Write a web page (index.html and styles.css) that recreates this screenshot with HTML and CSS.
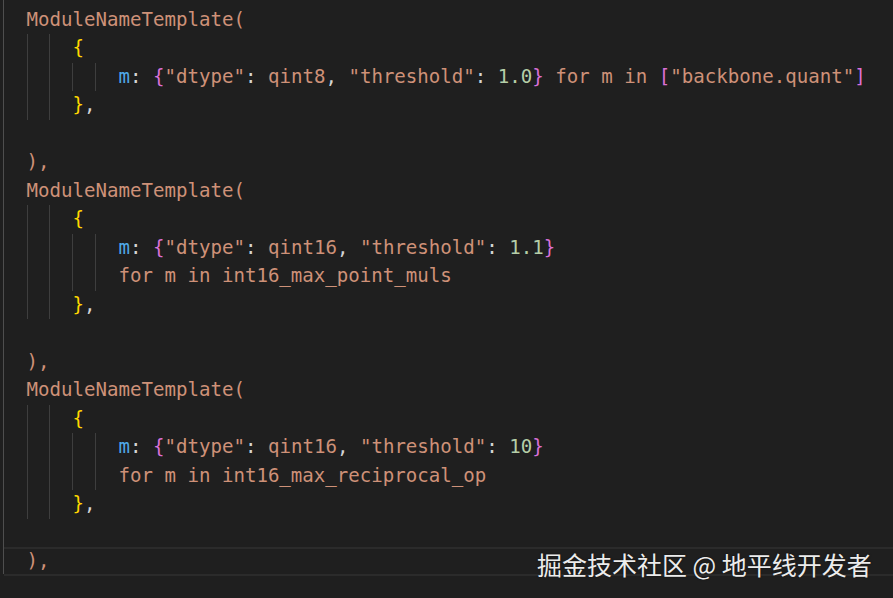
FILE: index.html
```html
<!DOCTYPE html>
<html>
<head>
<meta charset="utf-8">
<link rel="stylesheet" href="styles.css">
</head>
<body>
<div class="editor">
  <div class="line"><span class="s">ModuleNameTemplate(</span></div>
  <div class="line"><span class="g"></span><span class="g"></span><span class="y">{</span></div>
  <div class="line"><span class="g"></span><span class="g"></span><span class="g"></span><span class="g"></span><span><span class="v">m</span><span class="p">: </span><span class="pk">{</span><span class="s">"dtype"</span><span class="p">: </span><span class="s">qint8</span><span class="p">, </span><span class="s">"threshold"</span><span class="p">: </span><span class="n">1.0</span><span class="pk">}</span><span class="s"> for m in </span><span class="pk">[</span><span class="s">"backbone.quant"</span><span class="pk">]</span></span></div>
  <div class="line"><span class="g"></span><span class="g"></span><span class="y">}</span><span class="p">,</span></div>
  <div class="line"></div>
  <div class="line"><span class="s">),</span></div>
  <div class="line"><span class="s">ModuleNameTemplate(</span></div>
  <div class="line"><span class="g"></span><span class="g"></span><span class="y">{</span></div>
  <div class="line"><span class="g"></span><span class="g"></span><span class="g"></span><span class="g"></span><span><span class="v">m</span><span class="p">: </span><span class="pk">{</span><span class="s">"dtype"</span><span class="p">: </span><span class="s">qint16</span><span class="p">, </span><span class="s">"threshold"</span><span class="p">: </span><span class="n">1.1</span><span class="pk">}</span></span></div>
  <div class="line"><span class="g"></span><span class="g"></span><span class="g"></span><span class="g"></span><span class="s">for m in int16_max_point_muls</span></div>
  <div class="line"><span class="g"></span><span class="g"></span><span class="y">}</span><span class="p">,</span></div>
  <div class="line"></div>
  <div class="line"><span class="s">),</span></div>
  <div class="line"><span class="s">ModuleNameTemplate(</span></div>
  <div class="line"><span class="g"></span><span class="g"></span><span class="y">{</span></div>
  <div class="line"><span class="g"></span><span class="g"></span><span class="g"></span><span class="g"></span><span><span class="v">m</span><span class="p">: </span><span class="pk">{</span><span class="s">"dtype"</span><span class="p">: </span><span class="s">qint16</span><span class="p">, </span><span class="s">"threshold"</span><span class="p">: </span><span class="n">10</span><span class="pk">}</span></span></div>
  <div class="line"><span class="g"></span><span class="g"></span><span class="g"></span><span class="g"></span><span class="s">for m in int16_max_reciprocal_op</span></div>
  <div class="line"><span class="g"></span><span class="g"></span><span class="y">}</span><span class="p">,</span></div>
  <div class="line"></div>
  <div class="line current"><span class="s">),</span></div>
</div>
<div class="watermark">掘金技术社区 @ 地平线开发者</div>
</body>
</html>
```
FILE: styles.css
```css
html, body {
  margin: 0;
  padding: 0;
  background: #1f1f1f;
  width: 893px;
  height: 598px;
  overflow: hidden;
}
.editor {
  margin-left: 3px;
  border-left: 1px solid #4e4e4e;
  padding-top: 5.5px;
  padding-left: 22.5px;
  height: 568px;
  font-family: "DejaVu Sans Mono", "Liberation Mono", monospace;
  font-size: 19.1px;
  color: #ce9178;
}
.line {
  display: flex;
  height: 28.5px;
  line-height: 28.5px;
  white-space: pre;
}
.line.current {
  box-sizing: border-box;
  margin-left: -22.5px;
  padding-left: 22.5px;
  border-top: 2px solid #2b2b2b;
  border-bottom: 2px solid #2b2b2b;
  line-height: 24.5px;
}
.g {
  width: 2ch;
  flex: none;
  box-shadow: inset 1px 0 0 #3e3e3e;
}
.s { color: #ce9178; }
.y { color: #ffd700; }
.pk { color: #da70d6; }
.v { color: #4fa9e8; }
.p { color: #d4d4d4; }
.n { color: #b5cea8; }
.watermark {
  position: absolute;
  left: 537px;
  top: 547px;
  font-family: "Noto Sans CJK SC", "Noto Sans", sans-serif;
  font-size: 25px;
  line-height: 34px;
  color: #ececec;
  text-shadow: 0 0 2px rgba(0,0,0,0.6);
  white-space: nowrap;
}
```
